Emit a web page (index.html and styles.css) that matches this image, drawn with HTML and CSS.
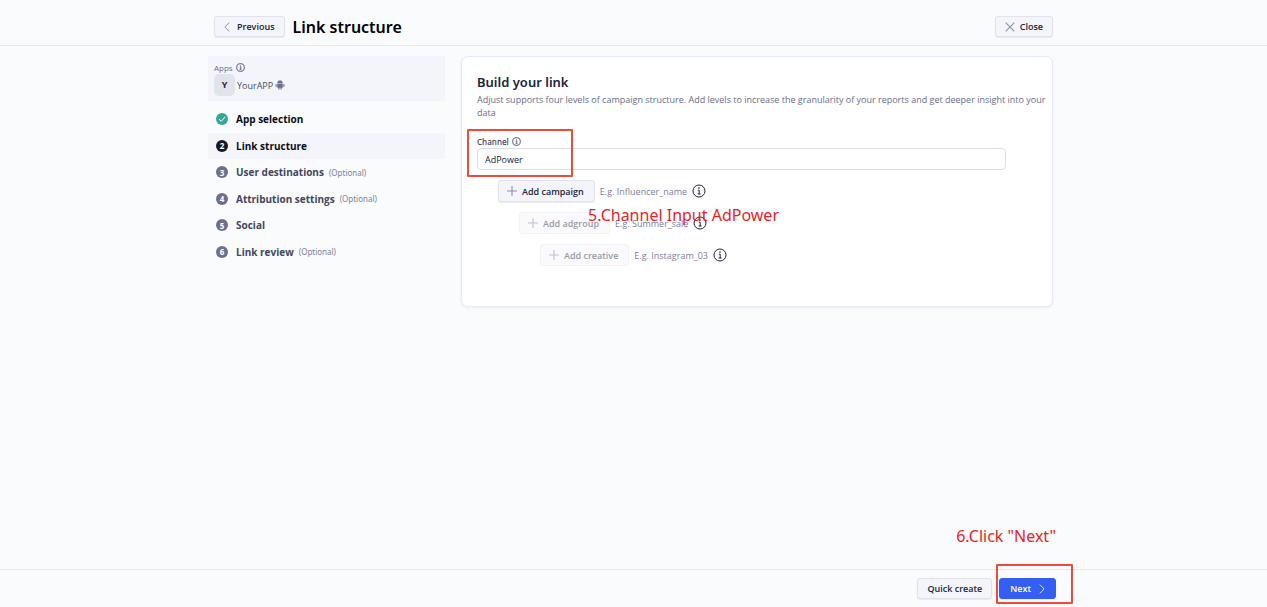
FILE: index.html
```html
<!DOCTYPE html>
<html lang="en">
<head>
<meta charset="utf-8">
<title>Link structure</title>
<link rel="stylesheet" href="styles.css">
</head>
<body>
<svg class="sprite" aria-hidden="true">
  <symbol id="info" viewBox="0 0 14 14"><circle cx="7" cy="7" r="6" fill="none" stroke="currentColor"/><path d="M5.8 6.200H7.200V10M5.600 10H8.600" fill="none" stroke="currentColor"/><circle cx="7" cy="4.100" r=".8" fill="currentColor"/></symbol>
  <symbol id="plus" viewBox="0 0 10 10"><path d="M5 0V10M0 5H10" fill="none" stroke="currentColor" stroke-width="1.1"/></symbol>
</svg>
<header class="topbar">
  <div class="wrap topbar-inner">
    <button class="btn btn-prev" type="button"><svg class="chevron" viewBox="0 0 6 10"><path d="M5.2.6L.9 5l4.3 4.4" fill="none" stroke="currentColor"/></svg>Previous</button>
    <h1 class="title">Link structure</h1>
    <button class="btn btn-close" type="button"><svg class="icon-close" viewBox="0 0 10 10"><path d="M.7.7l8.6 8.6M9.3.7L.7 9.3" fill="none" stroke="currentColor" stroke-width="1.1"/></svg>Close</button>
  </div>
</header>
<main class="wrap content">
  <aside class="sidebar">
    <section class="apps">
      <div class="apps-label">Apps <svg class="info-sm"><use href="#info"/></svg></div>
      <div class="app"><span class="avatar">Y</span><span>YourAPP</span>
        <svg class="android" viewBox="0 0 10 10" fill="currentColor"><path d="M2.2 3.4C2.3 1 3.5.5 5 .5s2.700.5 2.800 2.900zM2.200 4h5.600v3.700H6.700V9.500H5.500V7.800h-1V9.500H3.300V7.700H2.200zM.6 4.100h1v2.800h-1zM8.400 4.100h1v2.800h-1z"/></svg>
      </div>
    </section>
    <nav>
      <ol class="steps">
        <li class="step done"><span class="badge"><svg class="tick" viewBox="0 0 8 8"><path d="M1 4.200L3.200 6.300L7.200 1.800" fill="none" stroke="currentColor"/></svg></span>App selection</li>
        <li class="step active" aria-current="step"><span class="badge">2</span>Link structure</li>
        <li class="step"><span class="badge">3</span>User destinations<small class="optional">(Optional)</small></li>
        <li class="step"><span class="badge">4</span>Attribution settings<small class="optional">(Optional)</small></li>
        <li class="step"><span class="badge">5</span>Social</li>
        <li class="step"><span class="badge">6</span>Link review<small class="optional">(Optional)</small></li>
      </ol>
    </nav>
  </aside>
  <section class="card">
    <h2 class="card-title">Build your link</h2>
    <p class="lead">Adjust supports four levels of campaign structure. Add levels to increase the granularity of your reports and get deeper insight into your data</p>
    <div class="field">
      <label class="label" for="channel">Channel <svg class="info-sm"><use href="#info"/></svg></label>
      <input class="input" id="channel" type="text" value="AdPower">
      <div class="mark mark-channel"></div>
    </div>
    <div class="levels">
      <div class="level"><button class="btn btn-add" type="button"><svg class="plus"><use href="#plus"/></svg>Add campaign</button><span class="hint">E.g. Influencer_name</span><svg class="info"><use href="#info"/></svg></div>
      <div class="level level-2"><button class="btn btn-add" type="button" disabled><svg class="plus"><use href="#plus"/></svg>Add adgroup</button><span class="hint">E.g. Summer_sale</span><svg class="info"><use href="#info"/></svg></div>
      <div class="level level-3"><button class="btn btn-add" type="button" disabled><svg class="plus"><use href="#plus"/></svg>Add creative</button><span class="hint">E.g. Instagram_03</span><svg class="info"><use href="#info"/></svg></div>
      <div class="note note-channel">5.Channel Input AdPower</div>
    </div>
  </section>
</main>
<footer class="bottombar">
  <div class="wrap bottombar-inner">
    <button class="btn btn-quick" type="button">Quick create</button>
    <div class="next">
      <button class="btn btn-next" type="button">Next<svg class="chevron" viewBox="0 0 6 10"><path d="M.8.6L5.100 5L.8 9.400" fill="none" stroke="currentColor"/></svg></button>
      <div class="mark mark-next"></div>
      <div class="note note-next">6.Click "Next"</div>
    </div>
  </div>
</footer>
</body>
</html>
```
FILE: styles.css
```css
* { box-sizing: border-box; }

body {
  margin: 0;
  min-height: 100vh;
  display: flex;
  flex-direction: column;
  background: #f9fbfd;
  color: #20243a;
  font-family: "Open Sans", "Noto Sans", sans-serif;
  font-size: 9px;
}

.sprite { position: absolute; width: 0; height: 0; }
svg { flex: none; }

.wrap { width: 100%; max-width: 851px; margin: 0 auto; padding-right: 6px; }

.topbar { border-bottom: 1px solid #e6e7f1; }
.topbar-inner {
  display: flex;
  align-items: center;
  gap: 8px;
  height: 45px;
  padding-top: 8px;
  padding-left: 6px;
}
.title { flex: 1; margin: 0; color: #000; font-family: "Noto Sans", sans-serif; font-size: 16px; font-weight: 600; line-height: 24px; }

.btn {
  display: inline-flex;
  align-items: center;
  justify-content: center;
  height: 21px;
  padding: 0 9px;
  border: 1px solid #e1e2ee;
  border-radius: 3px;
  background: #f4f5fa;
  box-shadow: 0 1px 1px #e9eaf2;
  color: #20243a;
  font: inherit;
  font-weight: 600;
  white-space: nowrap;
}
.btn svg { color: #8e90ab; }
.btn:disabled { color: #999ba9; background: #fafafd; border-color: #f1f2f7; box-shadow: none; }
.btn:disabled svg { color: #bfc0d0; }
.chevron { width: 6px; height: 10px; }
.btn-prev { gap: 7px; }
.btn-close { gap: 5px; }
.icon-close { width: 10px; height: 10px; }

.content { flex: 1; display: flex; align-items: flex-start; gap: 16px; padding-top: 10px; }
.sidebar { width: 237px; flex: none; }
.apps { padding: 5px 6px; background: #f4f5fa; color: #6a6d8c; }
.apps-label { display: flex; align-items: center; gap: 3px; height: 13px; font-size: 8px; }
.info-sm { width: 9px; height: 9px; color: #7d80a0; }
.info-sm use { stroke-width: 2; }
.app { display: flex; align-items: center; gap: 2px; color: #484b66; }
.avatar {
  width: 21px;
  height: 22px;
  border-radius: 5px;
  background: #e1e3ed;
  color: #20243a;
  font-weight: 700;
  line-height: 22px;
  text-align: center;
}
.android { width: 10px; height: 10px; color: #6c6f90; }

.steps {
  display: flex;
  flex-direction: column;
  justify-content: space-between;
  height: 159px;
  margin: 5px 0 0;
  padding: 0;
  list-style: none;
}
.step {
  display: flex;
  align-items: center;
  gap: 8px;
  height: 26px;
  padding-left: 8px;
  color: #43465f;
  font-size: 10px;
  font-weight: 700;
}
.done, .active { color: #0b0d18; }
.active { background: #f4f5fa; }
.badge {
  display: flex;
  align-items: center;
  justify-content: center;
  width: 12px;
  height: 12px;
  border-radius: 50%;
  background: #6c6f90;
  color: #fff;
  font-size: 8px;
  font-weight: 700;
}
.done .badge { background: #36a794; }
.active .badge { background: #15182b; }
.tick { width: 8px; height: 8px; }
.optional { color: #7d80a0; font-family: "Noto Sans", sans-serif; font-size: 8px; font-weight: 400; margin-left: -3px; }

.card {
  flex: 1;
  min-height: 251px;
  padding: 16px 4px 16px 15px;
  border: 1px solid #e8e9f2;
  border-radius: 7px;
  background: #fff;
  box-shadow: 0 1px 3px #ebecf4;
}
.card-title { margin: 0; font-family: "Noto Sans", sans-serif; font-size: 13px; font-weight: 600; line-height: 18px; }
.lead { margin: 2px 0 0; color: #6a6d8c; line-height: 13px; }
.field { position: relative; width: 529px; max-width: 100%; margin-top: 15px; }
.label { display: flex; align-items: center; gap: 3px; height: 14px; font-size: 8px; font-weight: 600; color: #484b66; }
.input {
  display: block;
  width: 100%;
  height: 22px;
  padding: 0 7px;
  border: 1px solid #dddeeb;
  border-radius: 4px;
  background: #fff;
  color: #20243a;
  font: inherit;
}
.levels { position: relative; display: grid; gap: 10px; margin-top: 10px; }
.level { display: flex; align-items: center; gap: 5px; padding-left: 21px; }
.level-2 { padding-left: 42px; }
.level-3 { padding-left: 63px; }
.btn-add { gap: 5px; height: 22px; padding: 0 10px 0 8px; }
.plus { width: 10px; height: 10px; }
.hint { color: #7d80a0; }
.info { width: 14px; height: 14px; color: #20243a; }

.bottombar { border-top: 1px solid #e6e7f1; }
.bottombar-inner { display: flex; justify-content: flex-end; gap: 7px; height: 37px; padding-top: 8px; padding-right: 3px; }
.next { position: relative; }
.btn-next { gap: 8px; padding: 0 10px; border-color: #355ff2; background: #355ff2; color: #fff; }
.btn-next svg { color: #dfe5ff; }

.mark { position: absolute; border: 2px solid #f04a3c; border-radius: 1px; pointer-events: none; }
.mark-channel { left: -10px; top: -5px; width: 106px; height: 48px; }
.mark-next { left: -3px; top: -14px; width: 77px; height: 40px; }
.note { position: absolute; color: #ee1c25; font-family: "Noto Sans", sans-serif; font-size: 16px; line-height: 22px; white-space: nowrap; pointer-events: none; }
.note-channel { left: 111px; top: 24px; }
.note-next { right: 0; top: -53px; }
```
